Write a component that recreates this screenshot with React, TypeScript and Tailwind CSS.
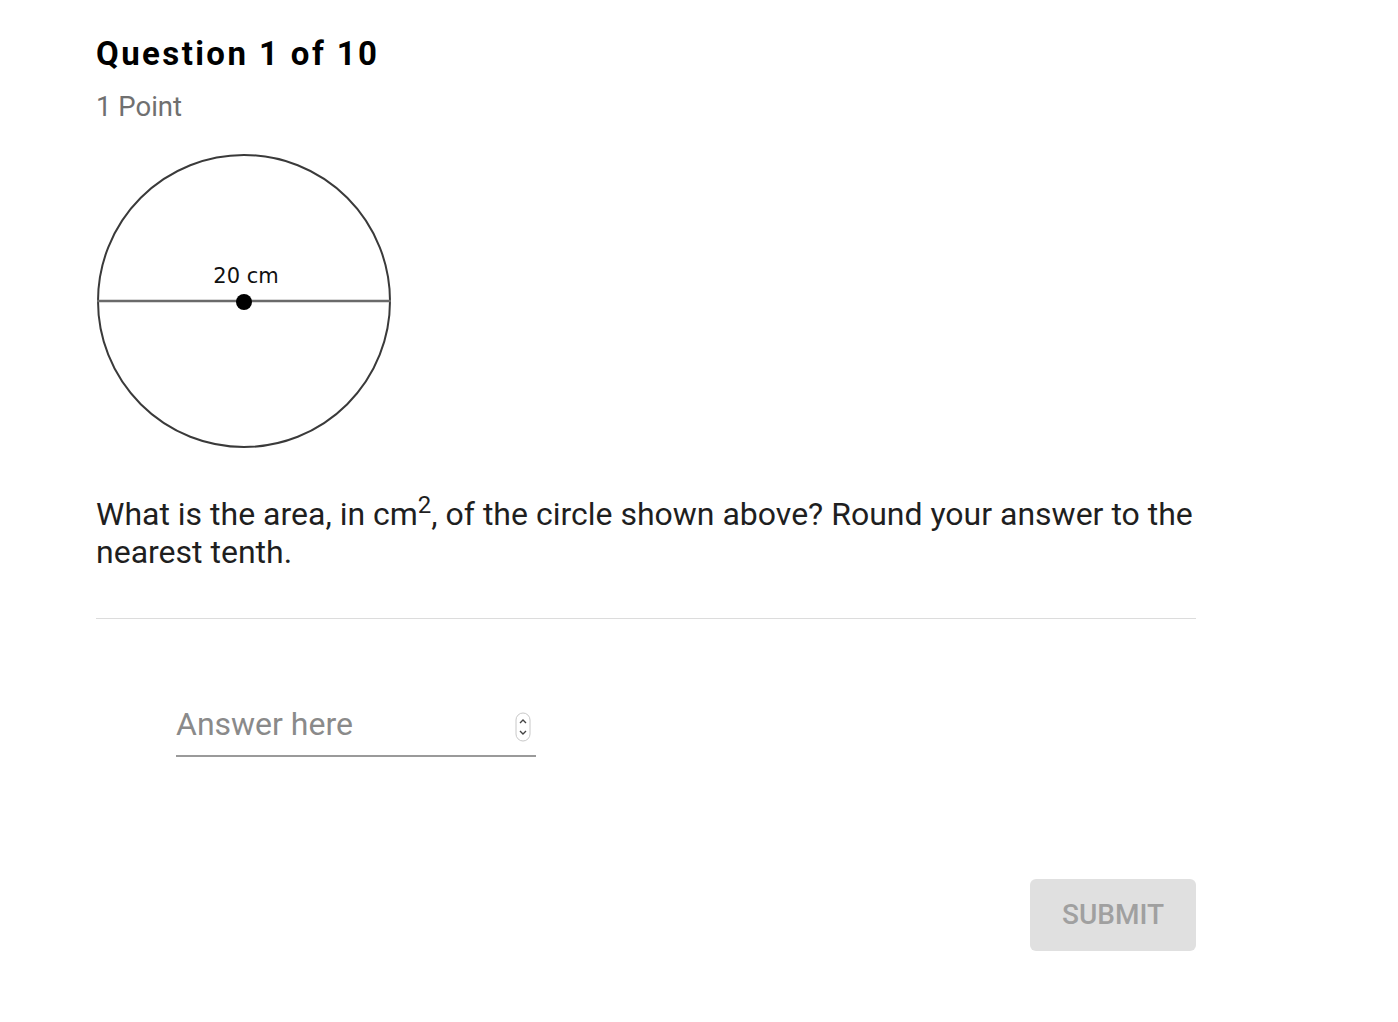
import React from "react";

export default function App() {
  return (
    <div className="min-h-screen bg-white" style={{ fontFamily: "Roboto, 'Liberation Sans', sans-serif" }}>
      <div className="pl-[96px] pt-[35px]">
        <div className="w-[1100px]">
          <h1 className="text-[33px] leading-[38px] font-bold tracking-[0.073em] text-black">Question 1 of 10</h1>
          <div className="mt-[18px] text-[27.5px] leading-[32px] text-[#707070]">1 Point</div>
          <svg className="mt-[30px] block" width="298" height="298" viewBox="0 0 298 298">
            <circle cx="148" cy="148" r="146" fill="none" stroke="#3a3a3a" strokeWidth="2" />
            <line x1="1" y1="148" x2="295" y2="148" stroke="#6a6a6a" strokeWidth="2.5" />
            <circle cx="148" cy="149" r="8" fill="#000" />
            <text x="150" y="130" textAnchor="middle" fontSize="21" fill="#111" fontFamily="'DejaVu Sans', sans-serif">20 cm</text>
          </svg>
          <p className="mt-[44px] text-[32px] leading-[38px] text-[#1f1f1f]">
            What is the area, in cm<sup>2</sup>, of the circle shown above? Round your answer to the nearest tenth.
          </p>
          <div className="mt-[47px] border-t border-[#dcdcdc]" />
          <div className="ml-[80px] mt-[80px] relative w-[360px] border-b-2 border-[#9a9a9a]">
            <input
              type="text"
              placeholder="Answer here"
              className="w-full h-[56px] pb-[6px] bg-transparent outline-none text-[32px] placeholder:text-[#8a8a8a]"
            />
            <svg className="absolute right-[5px] top-[13px]" width="16" height="30" viewBox="0 0 16 30">
              <rect x="1" y="1" width="14" height="28" rx="7" fill="#fff" stroke="#c8c8c8" strokeWidth="1" />
              <path d="M5 11 L8 8 L11 11" fill="none" stroke="#444" strokeWidth="1.4" />
              <path d="M5 19 L8 22 L11 19" fill="none" stroke="#444" strokeWidth="1.4" />
            </svg>
          </div>
          <div className="mt-[122px] flex justify-end">
            <button className="w-[166px] h-[72px] rounded-[6px] bg-[#e0e0e0] text-[28px] font-medium text-[#a0a0a0]">SUBMIT</button>
          </div>
        </div>
      </div>
    </div>
  );
}
